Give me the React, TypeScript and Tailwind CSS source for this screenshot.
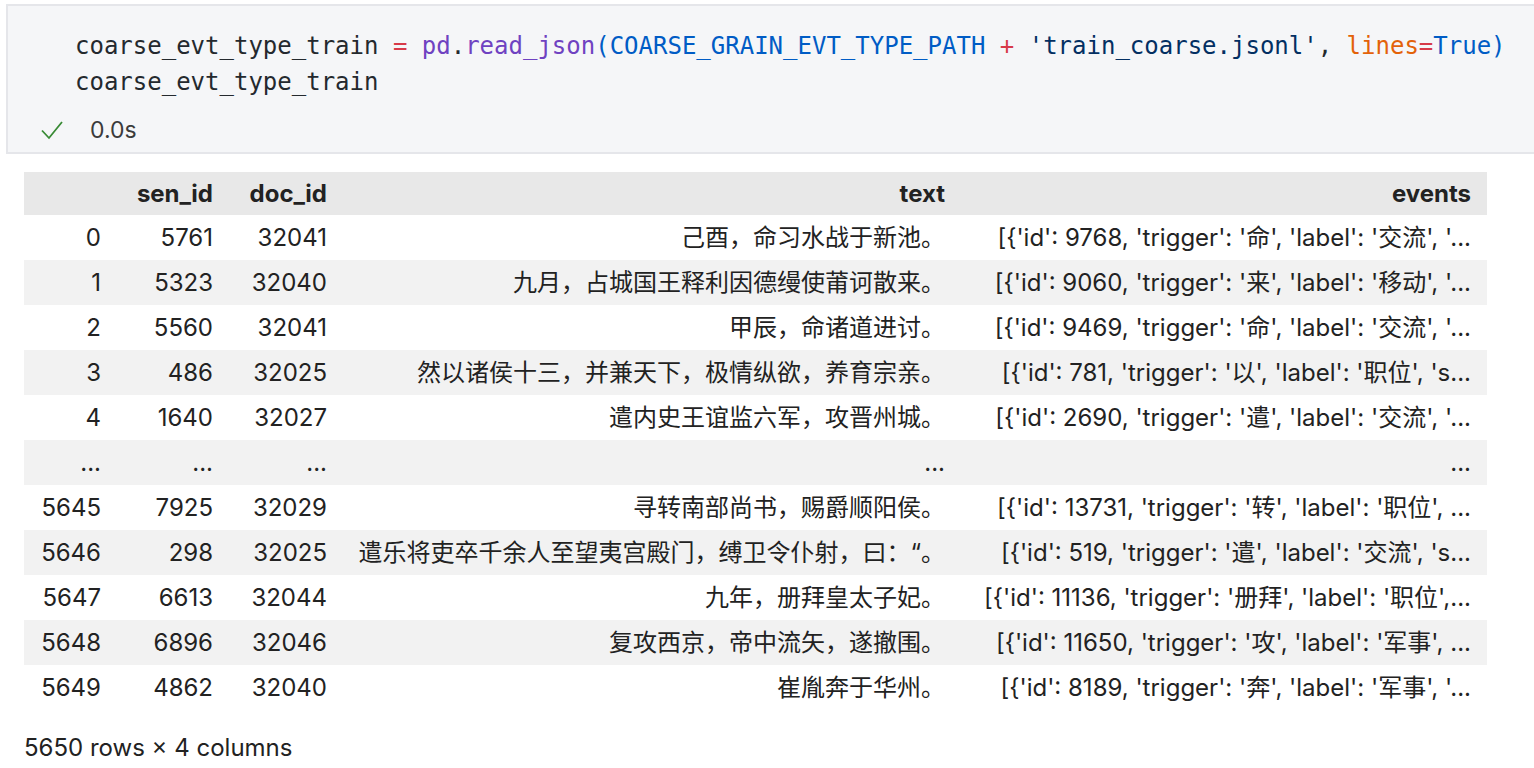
import React from 'react';

const rows: [string, string, string, string, string][] = [
  ['0', '5761', '32041', '己酉，命习水战于新池。', "[{'id': 9768, 'trigger': '命', 'label': '交流', '..."],
  ['1', '5323', '32040', '九月，占城国王释利因德缦使莆诃散来。', "[{'id': 9060, 'trigger': '来', 'label': '移动', '..."],
  ['2', '5560', '32041', '甲辰，命诸道进讨。', "[{'id': 9469, 'trigger': '命', 'label': '交流', '..."],
  ['3', '486', '32025', '然以诸侯十三，并兼天下，极情纵欲，养育宗亲。', "[{'id': 781, 'trigger': '以', 'label': '职位', 's..."],
  ['4', '1640', '32027', '遣内史王谊监六军，攻晋州城。', "[{'id': 2690, 'trigger': '遣', 'label': '交流', '..."],
  ['...', '...', '...', '...', '...'],
  ['5645', '7925', '32029', '寻转南部尚书，赐爵顺阳侯。', "[{'id': 13731, 'trigger': '转', 'label': '职位', ..."],
  ['5646', '298', '32025', '遣乐将吏卒千余人至望夷宫殿门，缚卫令仆射，曰：“。', "[{'id': 519, 'trigger': '遣', 'label': '交流', 's..."],
  ['5647', '6613', '32044', '九年，册拜皇太子妃。', "[{'id': 11136, 'trigger': '册拜', 'label': '职位',..."],
  ['5648', '6896', '32046', '复攻西京，帝中流矢，遂撤围。', "[{'id': 11650, 'trigger': '攻', 'label': '军事', ..."],
  ['5649', '4862', '32040', '崔胤奔于华州。', "[{'id': 8189, 'trigger': '奔', 'label': '军事', '..."],
];

const CodeCell = () => (
  <div className="mt-1 ml-[6px] border-2 border-r-0 border-[#e5e6ea] bg-[#f5f6f8]">
    <pre className="pl-[67px] pt-[22px] text-[24px] leading-[36px] text-[#24292e] font-['DejaVu_Sans_Mono',monospace]">
      <div>
        coarse_evt_type_train <span className="text-[#d73a49]">=</span>{' '}
        <span className="text-[#6f42c1]">pd</span>.<span className="text-[#6f42c1]">read_json</span>
        <span className="text-[#005cc5]">(COARSE_GRAIN_EVT_TYPE_PATH</span> <span className="text-[#d73a49]">+</span>{' '}
        <span className="text-[#032f62]">'train_coarse.jsonl'</span>, <span className="text-[#e36209]">lines</span>
        <span className="text-[#d73a49]">=</span>
        <span className="text-[#005cc5]">True)</span>
      </div>
      <div>coarse_evt_type_train</div>
    </pre>
    <div className="flex items-center h-[44px] mt-[8px] pl-[32px] gap-[26px]">
      <svg width="24" height="22" viewBox="0 0 24 22" fill="none">
        <path d="M2 11.5 L9 19 L22 3" stroke="#388a34" strokeWidth="1.8" />
      </svg>
      <span className="text-[23px] text-[#3b3b3b] font-['Inter',sans-serif]">0.0s</span>
    </div>
  </div>
);

export default function App() {
  return (
    <div className="w-[1534px] h-[768px] overflow-hidden bg-white">
      <CodeCell />
      <div className="mt-[18px] ml-[24px] font-['Inter','Noto_Sans_CJK_SC',sans-serif] text-[24px] text-[#222]">
        <table className="table-fixed border-collapse w-[1463px]">
          <colgroup>
            <col className="w-[93px]" />
            <col className="w-[112px]" />
            <col className="w-[114px]" />
            <col className="w-[618px]" />
            <col className="w-[526px]" />
          </colgroup>
          <thead>
            <tr className="h-[43px] bg-[#e8e8e8]">
              <th className="pr-4"></th>
              <th className="text-right pr-4 font-bold">sen_id</th>
              <th className="text-right pr-4 font-bold">doc_id</th>
              <th className="text-right pr-4 font-bold">text</th>
              <th className="text-right pr-4 font-bold">events</th>
            </tr>
          </thead>
          <tbody>
            {rows.map((r, i) => (
              <tr key={i} className={`h-[45px] ${i % 2 === 1 ? 'bg-[#f2f2f2]' : 'bg-white'}`}>
                {r.map((c, j) => (
                  <td key={j} className="text-right pr-4 whitespace-nowrap overflow-hidden">
                    {c}
                  </td>
                ))}
              </tr>
            ))}
          </tbody>
        </table>
        <div className="mt-[20px] text-[24px]">5650 rows × 4 columns</div>
      </div>
    </div>
  );
}
